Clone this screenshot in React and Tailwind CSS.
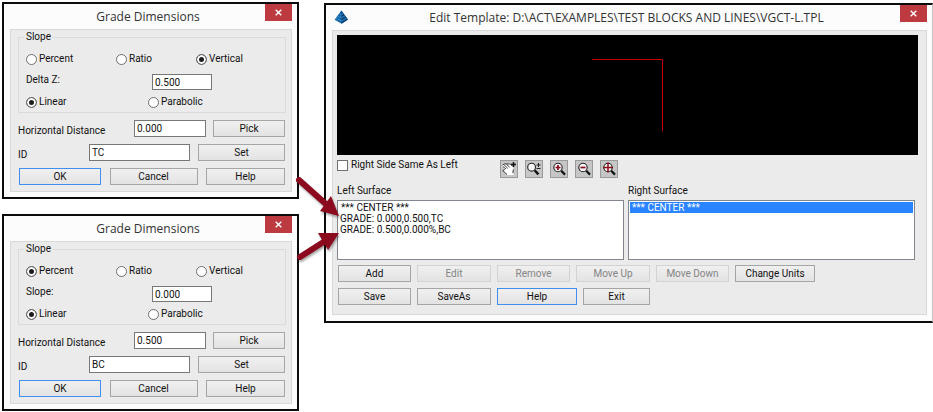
import React, { useState } from "react";

const buttonBase =
  "h-[17px] border text-center leading-[14px] bg-linear-to-b from-[#f0f0f0] to-[#e3e3e3]";

const PushButton = ({ children, width, primary, disabled }) => (
  <button
    type="button"
    disabled={disabled}
    className={`${buttonBase} ${width} ${
      primary
        ? "border-[#3f8fee]"
        : disabled
        ? "border-[#d3d3d3] text-[#858585]"
        : "border-[#a5a5a5]"
    }`}
  >
    {children}
  </button>
);

const TitleBar = ({ title, icon }) => (
  <header className="grid h-[25px] grid-cols-[1fr_auto_1fr] pr-[5px]">
    <div className="pl-2 pt-[5px]">{icon}</div>
    <h1 className="pt-[3px] font-['Open_Sans',sans-serif] text-[12px] leading-5 text-[#333333]">
      {title}
    </h1>
    <button
      type="button"
      aria-label="Close"
      className="flex h-[17px] w-[27px] items-center justify-center justify-self-end bg-[#bd3a41]"
    >
      <svg width="7" height="7" viewBox="0 0 7 7">
        <path d="M0.7 0.7L6.3 6.3M6.3 0.7L0.7 6.3" stroke="#fff" strokeWidth="1.4" />
      </svg>
    </button>
  </header>
);

const Radio = ({ name, label, value, onChange, width }) => (
  <label className={`flex h-3 items-center gap-[2px] ${width || ""}`}>
    <input
      type="radio"
      name={name}
      checked={value === label}
      onChange={() => onChange(label)}
      className="size-[11px] appearance-none rounded-full border border-[#6e6e6e] bg-white checked:bg-[#1c1c1c] checked:shadow-[inset_0_0_0_2px_#fff]"
    />
    {label}
  </label>
);

const inputStyle =
  "border border-[#777777] bg-white px-[2px] leading-3 outline-none";

const GradeDialog = ({ id, mode, valueLabel, value, distance, code }) => {
  const [slopeMode, setSlopeMode] = useState(mode);
  const [curve, setCurve] = useState("Linear");

  return (
    <section className="border-2 border-[#0c0c0c] bg-[#fcfcfc] pb-[5px]">
      <TitleBar title="Grade Dimensions" />
      <div className="ml-[6px] mr-[5px] border border-[#d9d9d9] bg-[#ebebeb] pb-[6px] pl-[7px] pr-[5px] pt-px">
        <fieldset className="border border-[#dadada] pb-1 pl-[5px]">
          <legend className="px-[2px]">Slope</legend>
          <div className="flex pl-[2px] pt-[10px]">
            <Radio name={`${id}-mode`} label="Percent" value={slopeMode} onChange={setSlopeMode} width="w-[90px]" />
            <Radio name={`${id}-mode`} label="Ratio" value={slopeMode} onChange={setSlopeMode} width="w-[80px]" />
            <Radio name={`${id}-mode`} label="Vertical" value={slopeMode} onChange={setSlopeMode} />
          </div>
          <div className="mt-[9px] flex items-start pl-[2px]">
            <label htmlFor={`${id}-value`} className="w-[126px]">
              {valueLabel}
            </label>
            <input id={`${id}-value`} defaultValue={value} className={`${inputStyle} h-4 w-[60px]`} />
          </div>
          <div className="mt-[6px] flex pl-[2px]">
            <Radio name={`${id}-curve`} label="Linear" value={curve} onChange={setCurve} width="w-[122px]" />
            <Radio name={`${id}-curve`} label="Parabolic" value={curve} onChange={setCurve} />
          </div>
        </fieldset>

        <div className="mt-[7px] flex flex-col gap-[7px] pr-px">
          <div className="flex items-center">
            <label htmlFor={`${id}-distance`} className="flex-1 pt-1">
              Horizontal Distance
            </label>
            <input id={`${id}-distance`} defaultValue={distance} className={`${inputStyle} mr-[7px] h-[17px] w-[72px]`} />
            <PushButton width="w-[72px]">Pick</PushButton>
          </div>
          <div className="flex items-center">
            <label htmlFor={`${id}-code`} className="flex-1 pt-1">
              ID
            </label>
            <input id={`${id}-code`} defaultValue={code} className={`${inputStyle} mr-2 h-[17px] w-[101px]`} />
            <PushButton width="w-[87px]">Set</PushButton>
          </div>
          <div className="flex justify-between pl-px">
            <PushButton width="w-[82px]" primary>OK</PushButton>
            <PushButton width="w-[88px]">Cancel</PushButton>
            <PushButton width="w-[79px]">Help</PushButton>
          </div>
        </div>
      </div>
    </section>
  );
};

const PyramidIcon = () => (
  <svg width="15" height="15" viewBox="0 0 15 15">
    <path d="M7.3 0.6L14 9.6L7.6 13.8L0.6 9.8Z" fill="#1767a8" />
    <path d="M7.3 0.6L14 9.6L7.6 13.8Z" fill="#0d4478" />
    <path d="M5.4 3.6L7.4 4.6L9.2 3.4M3.6 6L7.4 7.7L11.2 5.8M2 8.2L7.5 10.9L12.8 8" fill="none" stroke="#3d97d6" strokeWidth="0.8" />
  </svg>
);

const Lens = ({ children }) => (
  <>
    <circle cx="7" cy="6.5" r="4.2" fill="#f4f4f4" stroke="#222" strokeWidth="1.1" />
    <path d="M10.2 9.8L14 13.6" stroke="#111" strokeWidth="2.2" />
    {children}
  </>
);

const tools = [
  {
    name: "Pan",
    icon: (
      <>
        <path
          d="M1.6 4L3.6 2.6H9L11.4 5L12.6 8.6L12 11L12.6 14H6.4L4.6 12.4L1.8 9.6L3.6 8.6L2 6Z"
          fill="#fff"
        />
        <path
          d="M1.6 4L3.6 2.8L9.4 3L11.4 5.2M2 5.6L5 8M3 3.8L6.8 7.4M5.6 3.2L8.6 6.4M1.8 9.6L3.8 8.6M1.8 9.6L6 13.4M12.4 8.4L11.8 12"
          fill="none"
          stroke="#222"
          strokeWidth="0.9"
        />
        <path d="M12.5 1V6M10 3.5H15" stroke="#111" strokeWidth="1.5" />
      </>
    ),
  },
  {
    name: "Zoom",
    icon: (
      <>
        <circle cx="5.6" cy="6.2" r="3.9" fill="#f4f4f4" stroke="#222" strokeWidth="1.1" />
        <path d="M8.6 9.2L12.4 13.4" stroke="#111" strokeWidth="2.4" />
        <path d="M12.5 2V6M10.5 4H14.5M10.5 7.5H14.5" stroke="#222" strokeWidth="1" />
      </>
    ),
  },
  {
    name: "Zoom in",
    icon: (
      <Lens>
        <path d="M7 4V9M4.5 6.5H9.5" stroke="#8b0a1e" strokeWidth="1.7" />
      </Lens>
    ),
  },
  {
    name: "Zoom out",
    icon: (
      <Lens>
        <path d="M4.5 6.5H9.5" stroke="#8b0a1e" strokeWidth="1.7" />
      </Lens>
    ),
  },
  {
    name: "Zoom extents",
    icon: (
      <Lens>
        <path d="M7 1.5V11.500M2 6.5H12" stroke="#8b0a1e" strokeWidth="1.5" />
      </Lens>
    ),
  },
];

const SurfaceList = ({ label, items, selected }) => (
  <div className="flex-1">
    <h2>{label}</h2>
    <ul
      role="listbox"
      aria-label={label}
      className="mt-[3px] h-[60px] border border-[#82868f] bg-white px-px pt-px leading-[11px]"
    >
      {items.map((item, index) => (
        <li
          key={item}
          role="option"
          aria-selected={index === selected}
          className={`px-px ${index === selected ? "bg-[#2a84ff] text-white" : ""}`}
        >
          {item.startsWith("*") ? <span className="pl-px">{item}</span> : item}
        </li>
      ))}
    </ul>
  </div>
);

const TemplateEditor = () => (
  <section className="mt-px min-w-0 flex-1 border-2 border-r border-[#0c0c0c] border-r-[#c4c4c4] bg-[#fcfcfc] pb-[6px]">
    <TitleBar
      title="Edit Template: D:\ACT\EXAMPLES\TEST BLOCKS AND LINES\VGCT-L.TPL"
      icon={<PyramidIcon />}
    />
    <div className="ml-[6px] mr-[5px] border border-[#d9d9d9] bg-[#ebebeb] pb-[9px] pl-1 pr-2 pt-1">
      <div className="h-[120px] bg-black">
        <svg className="h-full w-full" viewBox="0 0 581 120">
          <path d="M255 24.5H325.5V96" fill="none" stroke="#c40000" strokeWidth="1" />
        </svg>
      </div>

      <div className="mt-1 flex items-start">
        <label className="flex w-[163px] items-center gap-[3px]">
          <input type="checkbox" className="size-[11px] appearance-none border border-[#707070] bg-white checked:bg-[#444444]" />
          Right Side Same As Left
        </label>
        <div className="flex gap-[7px] pt-px">
          {tools.map((tool) => (
            <button
              key={tool.name}
              type="button"
              aria-label={tool.name}
              className="size-[18px] border border-[#9a9a9a] bg-[#c6c6c6]"
            >
              <svg width="16" height="16" viewBox="0 0 16 16">
                {tool.icon}
              </svg>
            </button>
          ))}
        </div>
      </div>

      <div className="mr-[3px] mt-[7px] flex gap-1">
        <SurfaceList
          label="Left Surface"
          items={["*** CENTER ***", "GRADE: 0.000,0.500,TC", "GRADE: 0.500,0.000%,BC"]}
        />
        <SurfaceList label="Right Surface" items={["*** CENTER ***"]} selected={0} />
      </div>

      <div className="mt-[5px] flex gap-[6px] pl-px">
        <PushButton width="w-[73px]">Add</PushButton>
        <PushButton width="w-[74px]" disabled>Edit</PushButton>
        <PushButton width="w-[73px]" disabled>Remove</PushButton>
        <PushButton width="w-[74px]" disabled>Move Up</PushButton>
        <PushButton width="w-[73px]" disabled>Move Down</PushButton>
        <PushButton width="w-[80px]">Change Units</PushButton>
      </div>
      <div className="mt-[6px] flex gap-[6px] pl-px">
        <PushButton width="w-[73px]">Save</PushButton>
        <PushButton width="w-[74px]">SaveAs</PushButton>
        <PushButton width="w-[80px]" primary>Help</PushButton>
        <PushButton width="w-[67px]">Exit</PushButton>
      </div>
    </div>
  </section>
);

// arrows from each grade dialog to its line in the left surface list
const Arrows = () => (
  <svg
    className="pointer-events-none absolute left-[290px] top-[165px] drop-shadow-[1px_2px_1px_rgba(0,0,0,0.35)]"
    width="60"
    height="110"
    viewBox="0 0 60 110"
  >
    <g fill="#8b0a1e" stroke="#8b0a1e">
      <path d="M9 15L37 40" strokeWidth="6" strokeLinecap="round" />
      <path d="M41 31L49 51L30 46Z" stroke="none" />
      <path d="M10 92L35 76" strokeWidth="6" strokeLinecap="round" />
      <path d="M28 68L49 68L38 85Z" stroke="none" />
    </g>
  </svg>
);

export default function App() {
  return (
    <main className="relative flex min-h-screen items-start gap-[25px] bg-white pl-[2px] pt-[2px] font-['Roboto',sans-serif] text-[10px] leading-3 text-[#111111]">
      <div className="flex w-[297px] shrink-0 flex-col gap-[15px]">
        <GradeDialog
          id="top"
          mode="Vertical"
          valueLabel="Delta Z:"
          value="0.500"
          distance="0.000"
          code="TC"
        />
        <GradeDialog
          id="bottom"
          mode="Percent"
          valueLabel="Slope:"
          value="0.000"
          distance="0.500"
          code="BC"
        />
      </div>
      <TemplateEditor />
      <Arrows />
    </main>
  );
}
